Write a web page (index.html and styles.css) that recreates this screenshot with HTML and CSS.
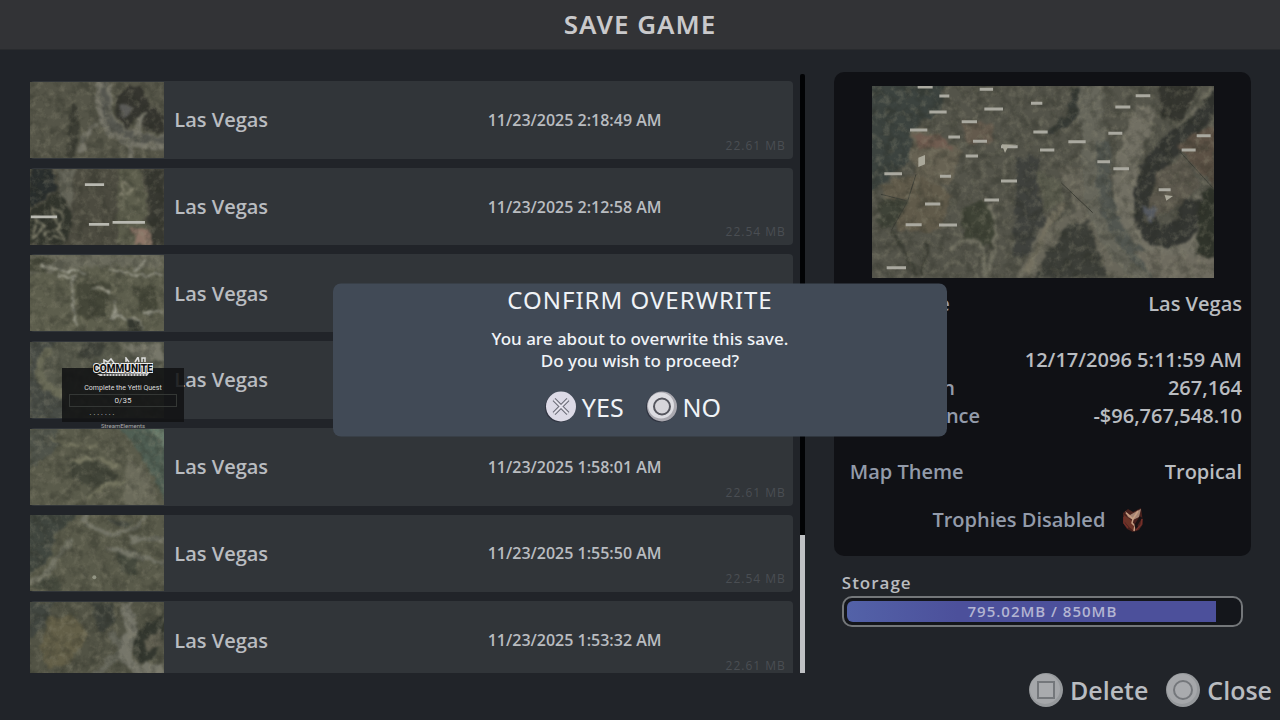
FILE: index.html
```html
<!DOCTYPE html>
<html lang="en">
<head>
	<meta charset="UTF-8">
	<title>Save Game</title>
	<link rel="stylesheet" href="styles.css">
</head>
<body>
	<!-- shared terrain texture -->
	<svg class="defs" aria-hidden="true">
		<defs>
			<filter id="rough" x="-5%" y="-5%" width="110%" height="110%" color-interpolation-filters="sRGB">
				<feTurbulence type="fractalNoise" baseFrequency="0.035" numOctaves="3" seed="4" result="n"/>
				<feDisplacementMap in="SourceGraphic" in2="n" scale="28" xChannelSelector="R" yChannelSelector="G"/>
				<feGaussianBlur stdDeviation="2.5"/>
			</filter>
			<filter id="light" x="0" y="0" width="100%" height="100%" color-interpolation-filters="sRGB">
				<feTurbulence type="fractalNoise" baseFrequency="0.045" numOctaves="4" seed="9"/>
				<feColorMatrix values="0 0 0 0 0.56  0 0 0 0 0.55  0 0 0 0 0.47  3 0 0 0 -1.4"/>
			</filter>
			<filter id="dark" x="0" y="0" width="100%" height="100%" color-interpolation-filters="sRGB">
				<feTurbulence type="fractalNoise" baseFrequency="0.03" numOctaves="4" seed="23"/>
				<feColorMatrix values="0 0 0 0 0.15  0 0 0 0 0.16  0 0 0 0 0.13  0 3 0 0 -1.3"/>
			</filter>
		</defs>
	</svg>

	<header class="top"><h1>SAVE GAME</h1></header>

	<main class="main">
		<div class="saves">
			<div class="view">
				<ul class="list">
					<li><button class="save">
						<svg class="thumb" viewBox="90 68 402 226" preserveAspectRatio="xMidYMid slice">
							<rect x="90" y="68" width="402" height="226" fill="#555548"/>
							<g filter="url(#rough)">
								<path d="M210 130l25 10 5 80-20 74h-25l15-80z" fill="#3c3d34"/>
								<path d="M345 125q30-50 75-45l30 60 42 30v50l-60-10-20-45-30 40q-35-20-37-80z" fill="#35352f"/>
								<path d="M355 140q20-20 40 5l-20 35z" fill="#5a5a57"/>
								<path d="M315 68q-20 110 30 145 60 40 147 35" fill="none" stroke="#77766a" stroke-width="48"/>
								<path d="M318 68q-15 105 30 137 60 38 150 35" fill="none" stroke="#55564f" stroke-width="20"/>
								<path d="M290 190q-35 20-45 90M380 245l10 49M405 230l20-70" fill="none" stroke="#77766a" stroke-width="16"/>
							</g>
							<rect class="l" x="90" y="68" width="402" height="226"/><rect class="d" x="90" y="68" width="402" height="226"/>
						</svg>
						<span class="name">Las Vegas</span><time>11/23/2025 2:18:49 AM</time><span class="size">22.61 MB</span>
					</button></li>
					<li><button class="save">
						<svg class="thumb" viewBox="90 328 402 225" preserveAspectRatio="xMidYMid slice">
							<rect x="90" y="328" width="402" height="225" fill="#4c4b40"/>
							<g filter="url(#rough)">
								<path d="M90 328h70l10 60-80 60z" fill="#292e2d"/>
								<path d="M90 455l95-65 35 95-30 68H90z" fill="#31342c"/>
								<path d="M175 328h50l-10 120-35-50z" fill="#66665a"/>
								<path d="M350 328h70l20 130-15 95h-75z" fill="#5c5d4c"/>
								<path d="M430 328h62v225h-40z" fill="#373831"/>
								<path d="M110 470l25 25-30 40zM160 440l30 20-15 40zM130 520l40-20 20 40zM370 360l20 30-25 20z" fill="none" stroke="#858370" stroke-width="5"/>
								<path d="M392 510l45-10 22 53h-50z" fill="#8c7567"/>
							</g>
							<rect class="l" x="90" y="328" width="402" height="225"/><rect class="d" x="90" y="328" width="402" height="225"/>
							<path d="M255 374h57M95 470h78M267 492h60M337 486h96" stroke="#b9b9b1" stroke-width="8"/>
						</svg>
						<span class="name">Las Vegas</span><time>11/23/2025 2:12:58 AM</time><span class="size">22.54 MB</span>
					</button></li>
					<li><button class="save">
						<svg class="thumb" viewBox="90 20 404 226" preserveAspectRatio="xMidYMid slice">
							<rect x="90" y="20" width="404" height="226" fill="#5d5e4d"/>
							<g filter="url(#rough)">
								<path d="M90 20h400l-10 40-210-5-180 25z" fill="#6b6b5d"/>
								<path d="M90 25l80 5-40 45-40-10zM230 100h100l-10 120-80-20zM400 110h70v70l-50 20z" fill="#454739"/>
								<path d="M120 50l80 20h60M180 85h45l-10 60 20 90M270 120l60 5M330 60l60 20 100-5M350 155l-10 50 60 5 30 30M430 190h60M400 70l40-35" fill="none" stroke="#9b9b8d" stroke-width="7"/>
								<path d="M385 205l55 40h-60z" fill="#34372f"/>
							</g>
							<rect class="l" x="90" y="20" width="404" height="226"/><rect class="d" x="90" y="20" width="404" height="226"/>
						</svg>
						<span class="name">Las Vegas</span>
					</button></li>
					<li><button class="save">
						<svg class="thumb" viewBox="90 278 402 226" preserveAspectRatio="xMidYMid slice">
							<rect x="90" y="278" width="402" height="226" fill="#56584b"/>
							<g filter="url(#rough)">
								<path d="M90 278h80l-55 50 20 90 60 20v66H90z" fill="#484c46"/>
								<path d="M150 300q-50 50-20 100l60 40" fill="none" stroke="#696a57" stroke-width="22"/>
								<path d="M260 278h60l-20 45h-70z" fill="#3f423a"/>
								<path d="M370 285h110l10 50-100-15z" fill="#77776a"/>
							</g>
							<rect class="l" x="90" y="278" width="402" height="226"/><rect class="d" x="90" y="278" width="402" height="226"/>
						</svg>
						<span class="name">Las Vegas</span>
					</button></li>
					<li><button class="save">
						<svg class="thumb" viewBox="90 15 402 226" preserveAspectRatio="xMidYMid slice">
							<rect x="90" y="15" width="402" height="226" fill="#5a5b4b"/>
							<g filter="url(#rough)">
								<path d="M90 15h80l10 50-90 70z" fill="#4f534a"/>
								<path d="M200 100l100 10 60 50-60 30-90-30z" fill="#43463a"/>
								<path d="M380 100l50 30 50 111h-110z" fill="#6b6b5b"/>
								<path d="M355 10h150v260q-45-140-150-260z" fill="#505f54"/>
								<path d="M440 10h70v75z" fill="#687b6b"/>
								<path d="M150 40l80 30 60-5M210 110l80-10 70 30M260 220l60-40 60-5" fill="none" stroke="#74745f" stroke-width="12"/>
							</g>
							<rect class="l" x="90" y="15" width="402" height="226"/><rect class="d" x="90" y="15" width="402" height="226"/>
						</svg>
						<span class="name">Las Vegas</span><time>11/23/2025 1:58:01 AM</time><span class="size">22.61 MB</span>
					</button></li>
					<li><button class="save">
						<svg class="thumb" viewBox="90 273 402 226" preserveAspectRatio="xMidYMid slice">
							<rect x="90" y="273" width="402" height="226" fill="#595a4a"/>
							<g filter="url(#rough)">
								<path d="M80 260h165l-75 70-20 70-70 60z" fill="#40463f"/>
								<path d="M90 475q60-20 80-70l50-60" fill="none" stroke="#747566" stroke-width="18"/>
								<path d="M90 490l75-45 20 54zM340 375l80 10-10 70-40-10z" fill="#45493d"/>
								<path d="M250 278q40 60 120 45 50-5 65-50M390 345h100M320 370l170 50" fill="none" stroke="#737467" stroke-width="14"/>
								<path d="M310 285l90 5-30 20z" fill="#43473f"/>
							</g>
							<rect class="l" x="90" y="273" width="402" height="226"/><rect class="d" x="90" y="273" width="402" height="226"/>
							<circle cx="283" cy="458" r="6" fill="#929483"/>
						</svg>
						<span class="name">Las Vegas</span><time>11/23/2025 1:55:50 AM</time><span class="size">22.54 MB</span>
					</button></li>
					<li><button class="save">
						<svg class="thumb" viewBox="90 533 402 226" preserveAspectRatio="xMidYMid slice">
							<rect x="90" y="533" width="402" height="226" fill="#525345"/>
							<g filter="url(#rough)">
								<path d="M90 533h80l-35 70-45 40z" fill="#414640"/>
								<path d="M145 580l80-10 40 60-60 90-60 10-20-70z" fill="#635f48"/>
								<path d="M275 533h60l10 60-50 30z" fill="#3c4039"/>
								<path d="M335 620l30 60-85 75" fill="none" stroke="#68695d" stroke-width="22"/>
								<path d="M375 533l20 90q-50 80 20 110l77 5" fill="none" stroke="#76766a" stroke-width="35"/>
								<path d="M440 600q-65 50-30 105 40 30 60-30l22-60v-50z" fill="#33372f"/>
								<path d="M435 650l40-35 10 50-40 15z" fill="#626052"/>
							</g>
							<rect class="l" x="90" y="533" width="402" height="226"/><rect class="d" x="90" y="533" width="402" height="226"/>
						</svg>
						<span class="name">Las Vegas</span><time>11/23/2025 1:53:32 AM</time><span class="size">22.61 MB</span>
					</button></li>
				</ul>
			</div>
			<div class="scroll"><div class="grip"></div></div>
		</div>

		<aside class="side">
			<section class="detail">
				<svg class="map" viewBox="33 35 1026 576" preserveAspectRatio="xMidYMid slice">
					<rect x="33" y="35" width="1026" height="576" fill="#54544a"/>
					<g filter="url(#rough)">
						<path d="M20 20h230l-15 90-70 50-20 100-60 50-70 50z" fill="#3c433f"/>
						<path d="M150 165l80 10 70 60-30 90-100 20-20-90z" fill="#676253"/>
						<path d="M160 175l80 5 40 50-60-15-50 10z" fill="#705c50"/>
						<path d="M300 140l90 10 10 50-80 10z" fill="#645a4d"/>
						<path d="M60 330l100-30 110 60-30 110-130 0z" fill="#605a4a"/>
						<path d="M50 380l90-10-40 90-40 0z" fill="#3f4338"/>
						<path d="M560 175q120-20 125-145l-50 10-20 80z" fill="#363a35"/>
						<path d="M300 400l70-20 40 60-10 80-90-20z" fill="#3f4336"/>
						<path d="M470 250l70-5-10 100 30 100-60 100-45 0z" fill="#3f413d"/>
						<path d="M590 280l120 0 30 190 90 140h-360l60-140 120-60z" fill="#68665a"/>
						<path d="M530 290l70 30 10 60-60 30z" fill="#5c5d4f"/>
						<path d="M690 30q-5 90 10 160-10 120 20 220 30 120 170 210" fill="none" stroke="#66665b" stroke-width="75"/>
						<path d="M860 100q-90 170-60 330 20 120 120 110 130-20 110-180" fill="none" stroke="#716f63" stroke-width="65"/>
						<path d="M725 200l5 120q5 170 170 280" fill="none" stroke="#525650" stroke-width="42"/>
						<path d="M890 30h130l-60 110-55-5z" fill="#34352f"/>
						<path d="M1070 60l-130 150q-85 60-90 180 0 100 70 95 70-10 75-110" fill="none" stroke="#343632" stroke-width="66"/>
						<path d="M1050 35q-50 90-110 120" fill="none" stroke="#6a695c" stroke-width="16"/>
						<path d="M890 290l80-40 50 80-60 60-110 50z" fill="#5c584d"/>
						<path d="M950 220l110 120v-180l-50 10z" fill="#5b5044"/>
						<path d="M1025 350l50-10v220l-70-20z" fill="#30342b"/>
						<path d="M840 400l50 0-20 50z" fill="#555960"/>
						<path d="M820 530l250 20v90h-170z" fill="#6e6b5f"/>
						<path d="M570 520l50-70 60-10 60 170H520z" fill="#3c3e38"/>
						<path d="M500 600q60-180 110-210" fill="none" stroke="#747060" stroke-width="16"/>
						<path d="M380 390q50 60 0 210M270 520q80-50 100 20v70" fill="none" stroke="#717062" stroke-width="12"/>
						<path d="M90 470l80 130M200 500l-20 110" fill="none" stroke="#3a3c33" stroke-width="10"/>
					</g>
					<path d="M600 325l95 90M955 230l100 110M60 360l80 20 25-80M140 380l-50 90" fill="none" stroke="#3d3e36" stroke-width="3"/>
					<rect class="l" x="33" y="35" width="1026" height="576"/><rect class="d" x="33" y="35" width="1026" height="576"/>
					<!-- district labels -->
					<path d="M170 38h45M235 65h30M205 113h52M147 167h52M356 45h40M370 104h56M302 142h46M262 188h35M336 201h42M314 245h37M510 87h34M517 173h43M622 202h52M537 227h43M420 217h50M742 177h42M709 262h38M757 283h47M763 98h45M824 64h44M1007 184h42M962 227h42M893 346h36M420 320h48M370 377h44M192 389h46M234 452h54M134 451h48M70 298h53M237 306h33M77 580h58" fill="none" stroke="#aaa9a0" stroke-width="9"/>
					<path d="M422 210l10 26 10-20 25-5zM911 362l25 3-20 14zM172 250l20-8v28l-20 8z" fill="#aaa89a"/>
				</svg>
				<dl class="facts">
					<dt>City Name</dt><dd>Las Vegas</dd>
					<dt class="skip">Date</dt><dd class="skip">12/17/2096 5:11:59 AM</dd>
					<dt>Population</dt><dd>267,164</dd>
					<dt>Bank Balance</dt><dd>-$96,767,548.10</dd>
					<dt class="skip">Map Theme</dt><dd class="skip">Tropical</dd>
				</dl>
				<p class="trophy">Trophies Disabled
					<svg viewBox="0 0 24 26" width="24" height="26" aria-hidden="true">
						<path d="M2 6l5-4 5 3 8-4 1 7 1 9-4 6-6 2-6-3-4-6z" fill="#48211d"/>
						<path d="M4 4l5 4 7-4 4-2-2 8-6 3-5-3z" fill="#a58474"/>
						<path d="M3 8l7 5 3 5v6l-5-4-5-6z" fill="#6b3428"/>
						<path d="M5 6l7 6-1 4 3 3-1 5M17 4l-5 8" fill="none" stroke="#c79d82" stroke-width="1.5"/>
						<path d="M20 10l-5 8 1 4" fill="none" stroke="#1c1214" stroke-width="3"/>
						<path d="M21 12l-1 6-5 5M3 10v6l4 5" fill="none" stroke="#75302a" stroke-width="1.5"/>
					</svg>
				</p>
			</section>
			<div class="storage">
				<label for="used">Storage</label>
				<div class="meter">
					<progress id="used" value="795.02" max="850"></progress>
					<span>795.02MB / 850MB</span>
				</div>
			</div>
		</aside>
	</main>

	<footer class="actions">
		<button>
			<svg viewBox="0 0 34 34" width="34" height="34" aria-hidden="true"><circle cx="17" cy="17" r="17" fill="#96999c"/><circle cx="16" cy="16" r="15" fill="#a5a7aa"/><path d="M9 9h16v16H9z" fill="#a9abae" stroke="#74777b" stroke-width="2"/></svg>
			Delete
		</button>
		<button>
			<svg viewBox="0 0 34 34" width="34" height="34" aria-hidden="true"><circle cx="17" cy="17" r="17" fill="#96999c"/><circle cx="16" cy="16" r="15" fill="#a5a7aa"/><circle cx="17" cy="17" r="9" fill="#a9abae" stroke="#74777b" stroke-width="2"/></svg>
			Close
		</button>
	</footer>

	<section class="dialog" role="dialog" aria-labelledby="ask">
		<h2 id="ask">CONFIRM OVERWRITE</h2>
		<p>You are about to overwrite this save.<br>Do you wish to proceed?</p>
		<div class="answer">
			<button>
				<svg viewBox="0 0 32 32" width="32" height="32" aria-hidden="true"><circle cx="15" cy="17" r="15" fill="#2f3440"/><circle cx="16" cy="16" r="15" fill="#dcdae6"/><path d="M9 9l14 14M23 9L9 23" stroke="#6a6b76" stroke-width="4"/><path d="M9 9l14 14M23 9L9 23" stroke="#e4e2ec" stroke-width="2"/></svg>
				YES
			</button>
			<button>
				<svg viewBox="0 0 32 32" width="32" height="32" aria-hidden="true"><circle cx="15" cy="17" r="15" fill="#2f3440"/><circle cx="16" cy="16" r="15" fill="#aaa9b0"/><circle cx="15" cy="15" r="13" fill="#dddde2"/><circle cx="16" cy="16" r="8" fill="#d6d5da" stroke="#55565e" stroke-width="2"/></svg>
				NO
			</button>
		</div>
	</section>

	<section class="quest">
		<svg class="logo" viewBox="0 0 60 22" width="60" height="22" aria-label="Communite">
			<path d="M11 7V3l4 2 3-3 3 4M33 5V1l3 4M42 5l3-5 1 5M49 5V1h3v4" fill="none" stroke="#ddd" stroke-width="1.5"/>
			<text x="30" y="15" text-anchor="middle">COMMUNITE</text>
			<path d="M4 17l52-1-2 3H7z" fill="#ccc"/><path d="M9 18h44" stroke="#333" stroke-dasharray="2 1"/>
		</svg>
		<p>Complete the Yetti Quest</p>
		<div class="count">0/35</div>
		<div class="dots">.......</div>
		<small>StreamElements</small>
	</section>
</body>
</html>
```
FILE: styles.css
```css
*{box-sizing: border-box;}
body,h1,h2,ul,p,dl,dd{margin: 0;padding: 0;}
body{min-height: 100vh;display: flex;flex-direction: column;position: relative;overflow: hidden;background: #212429;color: #b9bcc0;font-family: "Open Sans","Noto Sans",sans-serif;font-size: 20px;font-weight: 600;}
button{border: 0;padding: 0;background: none;color: inherit;font: inherit;cursor: pointer;}
svg{display: block;flex: none;}
.defs{position: absolute;width: 0;height: 0;}
.top{background: #323336;border-bottom: 1px solid #292b2e;}
.top h1{font-family: "Noto Sans",sans-serif;font-size: 26px;line-height: 49px;font-weight: 600;letter-spacing: 1px;text-align: center;color: #c9c9cb;}

.main{flex: 1;display: grid;grid-template-columns: 65fr 35fr;gap: 29px;padding: 22px 29px 0 30px;}
.saves{display: flex;gap: 7px;}
.view{flex: 1;height: calc(100vh - 128px);margin-top: 9px;overflow: hidden;}
.list{height: 101%;display: grid;grid-auto-rows: 1fr;gap: 9px;list-style: none;}
.list li{min-height: 0;}
.save{width: 100%;height: 100%;display: grid;grid-template-columns: 18% 1fr 31% 9%;align-items: center;background: #313539;border-radius: 4px;text-align: left;}
.save .thumb{width: 134px;height: 76px;}
.save .name{padding-left: 7px;}
.save time{font-size: 16px;}
.save .size{align-self: end;padding: 0 7px 4px 0;font-size: 12px;font-weight: 400;letter-spacing: 1px;line-height: 18px;text-align: right;white-space: nowrap;color: #4a4e53;}
.l{filter: url(#light);opacity: .3;}
.d{filter: url(#dark);opacity: .3;}
.scroll{width: 5px;margin-top: 2px;display: flex;align-items: flex-end;background: #020305;border-radius: 2px;}
.grip{width: 100%;height: 23%;background: #bfc1c4;}

.detail{padding: 14px 9px 22px 16px;background: #101115;border-radius: 10px;}
.map{width: 342px;height: 192px;margin: 0 auto 12px 22px;}
.facts{display: grid;grid-template-columns: auto 1fr;line-height: 28px;}
.facts dt{color: #939baa;}
.facts dd{text-align: right;}
.facts .skip{margin-top: 28px;}
.trophy{display: flex;justify-content: center;align-items: center;gap: 16px;margin-top: 20px;padding-right: 14px;line-height: 28px;color: #939baa;}
.storage{padding: 14px 8px 0;}
.storage label{display: block;font-size: 17px;line-height: 26px;letter-spacing: 1px;}
.meter{position: relative;padding: 3px 0 3px 3px;border: 2px solid #74777a;border-radius: 10px;background: #14161b;}
.meter progress{display: block;width: 100%;height: 21px;appearance: none;border: 0;background: none;}
.meter progress::-webkit-progress-bar{background: none;}
.meter progress::-webkit-progress-value{background: linear-gradient(90deg,#5362a8,#4c509b 30%);border-radius: 6px 0 0 6px;}
.meter span{position: absolute;inset: 0;font-size: 15px;line-height: 27px;letter-spacing: 1px;text-align: center;color: #b3b5d2;}

.actions{display: flex;justify-content: flex-end;gap: 18px;padding: 0 8px 13px;}
.actions button{display: flex;align-items: center;gap: 7px;font-size: 25px;line-height: 34px;}

.dialog{position: absolute;left: 26%;top: 50%;width: 48%;transform: translateY(-50%);padding-bottom: 13px;background: #414a56;border-radius: 8px;text-align: center;color: #f0f3f7;font-family: "Noto Sans",sans-serif;font-weight: 400;}
.dialog h2{font-size: 24px;line-height: 32px;font-weight: 400;letter-spacing: 1px;}
.dialog p{margin-top: 12px;font-size: 17px;line-height: 22px;font-weight: 500;}
.answer{display: flex;justify-content: center;gap: 22px;margin-top: 18px;padding-right: 14px;}
.answer button{display: flex;align-items: center;gap: 5px;font-size: 25px;line-height: 34px;}

.quest{position: absolute;left: 62px;top: 368px;width: 122px;height: 54px;padding: 0 7px;background: rgba(17,18,19,.88);color: #ddd;font-family: Roboto,sans-serif;font-weight: 400;text-align: center;}
.logo{margin: -11px auto 0;}
.logo text{font: 900 10px Roboto,sans-serif;fill: #111;stroke: #eee;stroke-width: 2px;paint-order: stroke;}
.quest p{margin-top: 4px;font-size: 7px;line-height: 11px;white-space: nowrap;}
.count{border: 1px solid #343735;font-size: 8px;line-height: 11px;}
.quest .dots{padding-right: 40px;font-size: 7px;line-height: 12px;letter-spacing: 2px;}
.quest small{display: block;font-size: 6px;line-height: 14px;color: #aaa;}
```
